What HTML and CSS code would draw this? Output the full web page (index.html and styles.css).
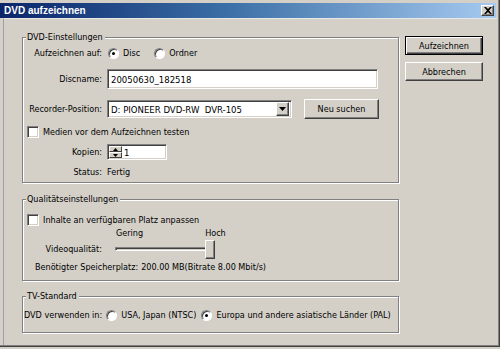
FILE: index.html
```html
<!DOCTYPE html>
<html lang="de">
<head>
<meta charset="utf-8">
<title>DVD aufzeichnen</title>
<link rel="stylesheet" href="styles.css">
</head>
<body>
<div class="window">
  <div class="titlebar">
    <span class="title">DVD aufzeichnen</span>
    <span class="close"><svg width="8" height="7" viewBox="0 0 8 7"><path d="M0 0h2l2 2 2-2h2L5 3.5 8 7H6L4 5 2 7H0l3-3.5z" fill="#000"/></svg></span>
  </div>
  <div class="client">
    <div class="main">
      <section class="group g1">
        <div class="legend">DVD-Einstellungen</div>
        <div class="row r1">
          <span class="lbl">Aufzeichnen auf:</span>
          <span class="radio checked"></span><span class="rtext">Disc</span>
          <span class="radio r-ordner"></span><span class="rtext">Ordner</span>
        </div>
        <div class="row r2">
          <span class="lbl">Discname:</span>
          <div class="field name-field">20050630_182518</div>
        </div>
        <div class="row r3">
          <span class="lbl">Recorder-Position:</span>
          <div class="field select"><span class="sel-text">D: PIONEER DVD-RW&nbsp; DVR-105</span><span class="drop"><svg width="7" height="4" viewBox="0 0 7 4"><path d="M0 0h7L3.5 4z" fill="#000"/></svg></span></div>
          <button class="btn btn-neu">Neu suchen</button>
        </div>
        <div class="row r4">
          <span class="check"></span><span class="ctext">Medien vor dem Aufzeichnen testen</span>
        </div>
        <div class="row r5">
          <span class="lbl">Kopien:</span>
          <div class="field spin">
            <span class="spin-btns"><span class="sb"><svg width="5" height="3" viewBox="0 0 5 3"><path d="M2.5 0L5 3H0z" fill="#000"/></svg></span><span class="sb"><svg width="5" height="3" viewBox="0 0 5 3"><path d="M0 0h5L2.5 3z" fill="#000"/></svg></span></span>
            <span class="spin-val">1</span>
          </div>
        </div>
        <div class="row r6">
          <span class="lbl">Status:</span>
          <span>Fertig</span>
        </div>
      </section>

      <section class="group g2">
        <div class="legend">Qualitätseinstellungen</div>
        <div class="row q1">
          <span class="check"></span><span class="ctext">Inhalte an verfügbaren Platz anpassen</span>
        </div>
        <div class="row q2">
          <span class="tick-lo">Gering</span><span class="tick-hi">Hoch</span>
        </div>
        <div class="row q3">
          <span class="lbl">Videoqualität:</span>
          <div class="slider"><span class="track"></span><span class="thumb"></span></div>
        </div>
        <div class="row q4">
          <span>Benötigter Speicherplatz:</span><span class="space-val">200.00 MB(Bitrate 8.00 Mbit/s)</span>
        </div>
      </section>

      <section class="group g3">
        <div class="legend">TV-Standard</div>
        <div class="row t1">
          <span>DVD verwenden in:</span>
          <span class="radio r-ntsc"></span><span class="rtext">USA, Japan (NTSC)</span>
          <span class="radio checked r-pal"></span><span class="rtext">Europa und andere asiatische Länder (PAL)</span>
        </div>
      </section>
    </div>
    <div class="side">
      <button class="btn default">Aufzeichnen</button>
      <button class="btn btn-cancel">Abbrechen</button>
    </div>
  </div>
</div>
</body>
</html>
```

FILE: styles.css
```css
* { box-sizing: border-box; }
html, body { margin: 0; padding: 0; }
body {
  width: 500px;
  height: 349px;
  overflow: hidden;
  background: #d4d0c8;
  font-family: "DejaVu Sans Condensed", "Liberation Sans", Arial, sans-serif;
  font-size: 9px;
  color: #000;
}
.window {
  width: 500px;
  height: 347px;
  display: flex;
  flex-direction: column;
  background: #d4d0c8;
  padding: 3px 2px 1px 0;
  border-right: 1px solid #404040;
  border-bottom: 1px solid #404040;
  box-shadow: inset -1px -1px 0 #808080;
}
.titlebar {
  height: 15px;
  display: flex;
  align-items: center;
  justify-content: space-between;
  padding: 0 2px 0 4px;
  margin-right: 1px;
  background: linear-gradient(to right, #0a246a 0%, #3a6ea5 45%, #a6caf0 100%);
}
.title {
  color: #fff;
  font-family: "Liberation Sans", Arial, sans-serif;
  font-weight: bold;
  font-size: 10px;
}
.close {
  width: 13px;
  height: 11px;
  display: flex;
  align-items: center;
  justify-content: center;
  background: #d4d0c8;
  border: 1px solid;
  border-color: #fff #404040 #404040 #fff;
  box-shadow: inset -1px -1px 0 #808080;
}
.client {
  flex: 1;
  display: flex;
  margin-left: 3px;
  border-left: 1px solid #a0a0a0;
  border-top: 1px solid #e8e8e8;
  padding: 18px 0 0 18px;
  gap: 6px;
}
.main {
  width: 377px;
  display: flex;
  flex-direction: column;
}
.group {
  position: relative;
  border: 1px solid #808080;
  box-shadow: inset 1px 1px 0 #fff, 1px 1px 0 #fff;
  display: flex;
  flex-direction: column;
}
.legend {
  position: absolute;
  top: -7px;
  left: 3px;
  padding: 0 2px 0 1px;
  background: #d4d0c8;
  line-height: 12px;
}
.row {
  display: flex;
  align-items: center;
  white-space: nowrap;
}
.lbl {
  width: 79px;
  text-align: right;
  margin-right: 5px;
  flex: none;
}

/* group 1 */
.g1 { padding-bottom: 3px; }
.r1 { height: 16px; margin-top: 7px; }
.r2 { height: 20px; margin-top: 8px; }
.r3 { height: 20px; margin-top: 10px; }
.r4 { height: 13px; margin-top: 6px; padding-left: 4px; }
.r5 { height: 16px; margin-top: 6px; }
.r6 { height: 14px; margin-top: 5px; }

.r1 .lbl { margin-right: 6px; }
.radio {
  width: 11px;
  height: 11px;
  border-radius: 50%;
  background: #fff;
  border: 1px solid;
  border-color: #808080 #fff #fff #808080;
  box-shadow: inset 1px 1px 0 #404040;
  position: relative;
  flex: none;
}
.radio.checked::after {
  content: "";
  position: absolute;
  left: 3px;
  top: 3px;
  width: 3px;
  height: 3px;
  border-radius: 50%;
  background: #000;
}
.rtext { margin-left: 4px; }
.r-ordner { margin-left: 14px; }

.field {
  background: #fff;
  border: 1px solid;
  border-color: #808080 #fff #fff #808080;
  box-shadow: inset 1px 1px 0 #404040, inset -1px -1px 0 #d4d0c8;
  display: flex;
  align-items: center;
}
.name-field {
  width: 271px;
  height: 20px;
  padding-left: 3px;
  font-size: 9.5px;
}
.select {
  width: 185px;
  height: 18px;
  padding: 0 2px 0 3px;
  justify-content: space-between;
  font-size: 9.5px;
}
.drop {
  width: 13px;
  height: 14px;
  background: #d4d0c8;
  border: 1px solid;
  border-color: #fff #404040 #404040 #fff;
  box-shadow: inset -1px -1px 0 #808080;
  display: flex;
  align-items: center;
  justify-content: center;
}
.btn {
  font-family: inherit;
  font-size: 9px;
  color: #000;
  background: #d4d0c8;
  border: 1px solid;
  border-color: #fff #404040 #404040 #fff;
  box-shadow: inset -1px -1px 0 #808080;
  padding: 0;
  display: flex;
  align-items: center;
  justify-content: center;
}
.btn-neu {
  width: 75px;
  height: 20px;
  margin-left: 12px;
}
.check {
  width: 12px;
  height: 12px;
  background: #fff;
  border: 1px solid;
  border-color: #808080 #fff #fff #808080;
  box-shadow: inset 1px 1px 0 #404040, inset -1px -1px 0 #d4d0c8;
  flex: none;
}
.ctext { margin-left: 4px; }
.spin {
  width: 60px;
  height: 16px;
  padding: 0 0 0 1px;
}
.spin-btns {
  display: flex;
  flex-direction: column;
  width: 13px;
  height: 12px;
}
.sb {
  flex: 1;
  background: #d4d0c8;
  border: 1px solid;
  border-color: #fff #404040 #404040 #fff;
  display: flex;
  align-items: center;
  justify-content: center;
}
.spin-val { margin-left: 2px; font-size: 9.5px; }

/* group 2 */
.g2 { margin-top: 16px; padding-bottom: 7px; }
.q1 { height: 12px; margin-top: 14px; padding-left: 4px; }
.q2 { height: 12px; margin-top: 1px; padding-left: 93px; }
.tick-hi { margin-left: 62px; }
.q3 { height: 20px; }
.slider {
  position: relative;
  width: 99px;
  height: 20px;
  margin-left: 8px;
}
.track {
  position: absolute;
  left: 0;
  right: 0;
  top: 8px;
  height: 4px;
  border: 1px solid;
  border-color: #808080 #fff #fff #808080;
  box-shadow: inset 1px 1px 0 #404040;
}
.thumb {
  position: absolute;
  left: 90px;
  top: 1px;
  width: 10px;
  height: 19px;
  background: #d4d0c8;
  border: 1px solid;
  border-color: #fff #404040 #404040 #fff;
  box-shadow: inset -1px -1px 0 #808080;
}
.q4 { height: 12px; margin-top: 2px; padding-left: 12px; }
.space-val { margin-left: 3px; }

/* group 3 */
.g3 { margin-top: 15px; padding-bottom: 10px; }
.t1 { height: 14px; margin-top: 11px; padding-left: 1px; }
.r-ntsc { margin-left: 4px; }
.r-pal { margin-left: 5px; }

/* side buttons */
.side {
  display: flex;
  flex-direction: column;
  gap: 7px;
  margin-top: -1px;
}
.side .btn {
  width: 78px;
  height: 19px;
}
.btn.default {
  border: 1px solid #000;
  box-shadow: inset 1px 1px 0 #fff, inset -1px -1px 0 #404040, inset -2px -2px 0 #808080;
}
```
